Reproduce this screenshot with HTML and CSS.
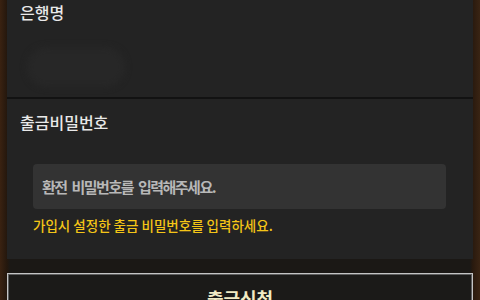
FILE: index.html
```html
<!Doctype html>
<html>
    <head>
        <title>출금신청</title>
        <link rel="stylesheet" href="styles.css">
    </head>
    <body>
        <div class='page'>
            <div class='panel'>
                <!-- 은행명 -->
                <div class='field field-bank'>
                    <div class='label'>은행명</div>
                    <div class='bank-blur'></div>
                </div>

                <!-- 출금비밀번호 -->
                <div class='field field-pass'>
                    <div class='label'>출금비밀번호</div>
                    <input class='pass-input' type='password' placeholder='환전 비밀번호를 입력해주세요.'>
                    <p class='help'>가입시 설정한 출금 비밀번호를 입력하세요.</p>
                </div>
            </div>

            <button class='submit-button'>출금신청</button>
        </div>
    </body>
</html>
```

FILE: styles.css
```css
/* CSS here */
body {
    margin: 0;
    background-color: #1b1815;
    background-image: linear-gradient(to right, #3a2211 0, #24170d 7px, rgba(0,0,0,0) 10px, rgba(0,0,0,0) 470px, #2a1a0e 473px, #3a2413 480px);
    font-family: "Noto Sans CJK KR", "Noto Sans", sans-serif;
    height: 300px;
    overflow: hidden;
}

.page {
    padding: 0 7px;
}

.panel {
    background-color: #232323;
}

.field-bank {
    height: 99px;
    padding: 2px 0 0 13px;
    box-sizing: border-box;
    border-bottom: 2px solid #121212;
}

.label {
    font-size: 16px;
    font-weight: 500;
    line-height: 20px;
    color: #e9e9e9;
}

.bank-blur {
    width: 98px;
    height: 40px;
    margin: 25px 0 0 7px;
    border-radius: 20px;
    background-color: #272727;
    filter: blur(3px);
}

.field-pass {
    padding: 13px 0 26px 13px;
}

.pass-input {
    display: block;
    box-sizing: border-box;
    width: 413px;
    height: 45px;
    margin: 32px 0 0 13px;
    padding: 0 9px;
    border: none;
    border-radius: 4px;
    background-color: #333333;
    font-family: inherit;
    font-size: 15px;
    letter-spacing: -1.5px;
    word-spacing: 3px;
    outline: none;
}

.pass-input::placeholder {
    color: #b8b8b8;
    font-weight: 700;
}

.help {
    margin: 8px 0 0 13px;
    font-size: 13.5px;
    font-weight: 500;
    line-height: 16px;
    color: #f4c517;
}

.submit-button {
    display: block;
    width: 100%;
    margin-top: 14px;
    padding: 12px 0 22px;
    box-sizing: border-box;
    border: 1px solid #c4c4c4;
    box-shadow: inset 0 0 0 1px #5e5e5e;
    background-color: #1b1a18;
    color: #f2ebc4;
    font-family: inherit;
    font-size: 18px;
    font-weight: 700;
    line-height: 24px;
    text-align: center;
}
```
